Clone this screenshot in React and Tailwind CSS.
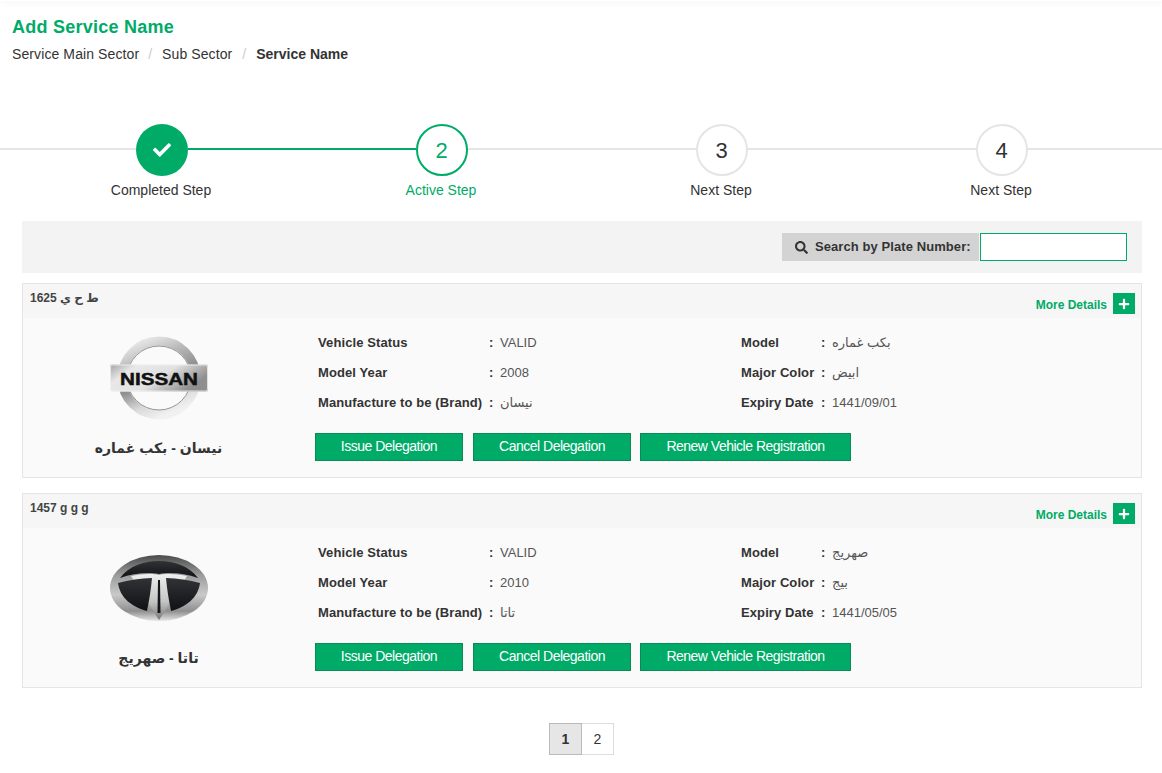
import { FaCheck, FaSearch, FaPlus } from 'react-icons/fa'

const FONT = { fontFamily: '"Liberation Sans", "DejaVu Sans", Arial, sans-serif' }

const STEPS = [
  { label: 'Completed Step', state: 'done' },
  { label: 'Active Step', state: 'active', n: 2 },
  { label: 'Next Step', state: 'next', n: 3 },
  { label: 'Next Step', state: 'next', n: 4 },
]

const VEHICLES = [
  {
    plate: 'ط ح ي 1625',
    logo: 'nissan',
    title: 'نيسان - بكب غماره',
    status: 'VALID', model: 'بكب غماره', year: '2008', color: 'ابيض', brand: 'نيسان', expiry: '1441/09/01',
  },
  {
    plate: '1457 g g g',
    logo: 'tata',
    title: 'تاتا - صهريج',
    status: 'VALID', model: 'صهريج', year: '2010', color: 'بيج', brand: 'تاتا', expiry: '1441/05/05',
  },
]

function NissanLogo() {
  return (
    <svg width="100" height="86" viewBox="0 0 100 86">
      <defs>
        <linearGradient id="nRing" x1="0.2" y1="0" x2="0.6" y2="1">
          <stop offset="0" stopColor="#e9e9e9" />
          <stop offset="0.3" stopColor="#b4b4b4" />
          <stop offset="0.55" stopColor="#8e8e8e" />
          <stop offset="0.8" stopColor="#d9d9d9" />
          <stop offset="1" stopColor="#f1f1f1" />
        </linearGradient>
        <linearGradient id="nBar" x1="0" y1="0" x2="1" y2="0.4">
          <stop offset="0" stopColor="#a4a4a4" />
          <stop offset="0.25" stopColor="#e8e8e8" />
          <stop offset="0.6" stopColor="#e2e2e2" />
          <stop offset="1" stopColor="#8f8f8f" />
        </linearGradient>
      </defs>
      <circle cx="50" cy="43" r="37" fill="none" stroke="url(#nRing)" strokeWidth="9" />
      <circle cx="50" cy="43" r="32" fill="none" stroke="#777777" strokeWidth="0.8" />
      <rect x="1" y="29.5" width="98" height="27" rx="2" fill="url(#nBar)" />
      <rect x="1.5" y="30" width="97" height="26" rx="2" fill="none" stroke="#f4f4f4" strokeWidth="0.8" />
      <text x="50" y="49.5" textAnchor="middle" fontFamily="Liberation Sans, Arial, sans-serif" fontWeight="700" fontSize="17" textLength="78" lengthAdjust="spacingAndGlyphs" fill="#111111" stroke="#111111" strokeWidth="0.5">NISSAN</text>
    </svg>
  )
}

function TataLogo() {
  return (
    <svg width="100" height="68" viewBox="0 0 100 68">
      <defs>
        <linearGradient id="tBody" x1="0" y1="0" x2="0" y2="1">
          <stop offset="0" stopColor="#4a4a4a" />
          <stop offset="0.3" stopColor="#9a9a9a" />
          <stop offset="0.6" stopColor="#c9c9c9" />
          <stop offset="0.85" stopColor="#8f8f8f" />
          <stop offset="1" stopColor="#e6e6e6" />
        </linearGradient>
        <linearGradient id="tDark" x1="0" y1="0" x2="0" y2="1">
          <stop offset="0" stopColor="#303236" />
          <stop offset="1" stopColor="#101115" />
        </linearGradient>
        <linearGradient id="tStem" x1="0" y1="0" x2="0" y2="1">
          <stop offset="0" stopColor="#f0f0f0" />
          <stop offset="0.6" stopColor="#c4c4c4" />
          <stop offset="1" stopColor="#777777" />
        </linearGradient>
      </defs>
      <ellipse cx="50" cy="34" rx="49" ry="33" fill="url(#tBody)" />
      <path d="M11 24 C20 12 35 7 50 7 C65 7 80 12 89 24 C76 19 60 18 50 20 C40 18 24 19 11 24 Z" fill="url(#tDark)" />
      <path d="M22 22 C30 20 44 19 50 21 C56 19 70 20 78 22 L50 66 Z" fill="url(#tStem)" />
      <path d="M9 29 C20 26 32 24.5 43 24 C42 36 40 47 38 57 C23 53 11 44 9 29 Z" fill="url(#tDark)" />
      <path d="M91 29 C80 26 68 24.5 57 24 C58 36 60 47 62 57 C77 53 89 44 91 29 Z" fill="url(#tDark)" />
      <path d="M49 26 H51 L51.5 59 H48.5 Z" fill="#15161a" />
    </svg>
  )
}

function Step({ step }) {
  if (step.state === 'done') {
    return (
      <div className="w-[52px] h-[52px] rounded-full bg-[#00ab67] flex items-center justify-center shrink-0 text-white">
        <FaCheck size={18} />
      </div>
    )
  }
  const cls = step.state === 'active'
    ? 'border-[#00ab67] text-[#00ab67]'
    : 'border-[#e5e5e5] text-[#333333]'
  return (
    <div className={`w-[52px] h-[52px] rounded-full border-2 bg-white flex items-center justify-center shrink-0 pr-[1px] text-[22px] ${cls}`}>
      {step.n}
    </div>
  )
}

function Stepper() {
  return (
    <div className="mt-[60px]">
      <div className="flex items-center">
        <div className="w-[136px] h-[2px] -translate-y-[1px] bg-[#e5e5e5]" />
        <Step step={STEPS[0]} />
        <div className="w-[228px] h-[2px] -translate-y-[1px] bg-[#00ab67]" />
        <Step step={STEPS[1]} />
        <div className="w-[228px] h-[2px] -translate-y-[1px] bg-[#e5e5e5]" />
        <Step step={STEPS[2]} />
        <div className="w-[228px] h-[2px] -translate-y-[1px] bg-[#e5e5e5]" />
        <Step step={STEPS[3]} />
        <div className="flex-1 h-[2px] -translate-y-[1px] bg-[#e5e5e5]" />
      </div>
      <div className="grid grid-cols-4 w-[1120px] ml-[21px] mt-[4px] text-[14px] leading-[20px] text-center">
        {STEPS.map((s, i) => (
          <div key={i} className={s.state === 'active' ? 'text-[#00ab67]' : 'text-[#333333]'}>{s.label}</div>
        ))}
      </div>
    </div>
  )
}

function Field({ label, value, labelW }) {
  return (
    <div className="flex items-center h-[30px] text-[13px]">
      <span className="font-bold text-[#333333] shrink-0 tracking-[0.1px]" style={{ width: labelW }}>{label}</span>
      <span className="font-bold text-[#333333] w-[11px] shrink-0">:</span>
      <span className="text-[#555555]">{value}</span>
    </div>
  )
}

function VehicleCard({ v }) {
  return (
    <div className="border border-[#e5e5e5] bg-[#fafafa] h-[195px]">
      <div className="h-[34px] bg-[#f6f6f6] flex justify-between pl-[7px] pr-[6px]">
        <div className="text-[12px] font-bold text-[#444444] mt-[6px] leading-[16px]">{v.plate}</div>
        <div className="flex items-start mt-[9px]">
          <span className="text-[12px] font-bold text-[#00ab67] mt-[4px] leading-[16px]">More Details</span>
          <span className="ml-[6px] w-[22px] h-[21px] bg-[#00ab67] flex items-center justify-center text-white">
            <FaPlus size={12} />
          </span>
        </div>
      </div>
      <div className="flex">
        <div className="w-[271px] shrink-0 flex flex-col items-center pt-[10px]">
          <div className="h-[100px] flex items-center justify-center w-full">
            {v.logo === 'nissan' ? <NissanLogo /> : <TataLogo />}
          </div>
          <div className="text-[14px] font-bold text-[#333333] mt-[8px] leading-[24px]">{v.title}</div>
        </div>
        <div className="flex-1 pt-[10px] pl-[24px]">
          <div className="flex">
            <div className="w-[423px] shrink-0">
              <Field label="Vehicle Status" value={v.status} labelW={171} />
              <Field label="Model Year" value={v.year} labelW={171} />
              <Field label="Manufacture to be (Brand)" value={v.brand} labelW={171} />
            </div>
            <div>
              <Field label="Model" value={v.model} labelW={80} />
              <Field label="Major Color" value={v.color} labelW={80} />
              <Field label="Expiry Date" value={v.expiry} labelW={80} />
            </div>
          </div>
          <div className="flex mt-[15px] -ml-[3px]">
            <button className="w-[148px] h-[28px] pb-[1px] bg-[#00ab67] border border-[#0b8a57] text-white text-[14px] tracking-[-0.5px]">Issue Delegation</button>
            <button className="w-[158px] h-[28px] pb-[1px] ml-[10px] bg-[#00ab67] border border-[#0b8a57] text-white text-[14px] tracking-[-0.5px]">Cancel Delegation</button>
            <button className="w-[211px] h-[28px] pb-[1px] ml-[9px] bg-[#00ab67] border border-[#0b8a57] text-white text-[14px] tracking-[-0.5px]">Renew Vehicle Registration</button>
          </div>
        </div>
      </div>
    </div>
  )
}

export default function App() {
  return (
    <div className="w-[1162px] h-[773px] overflow-hidden bg-white relative" style={FONT}>
      <div className="h-[1px] shadow-[0_0_6px_rgba(0,0,0,0.2)]" />
      <div className="pl-[12px] pt-[16px]">
        <h1 className="text-[18px] font-bold text-[#00ab67] leading-[20px] tracking-[0.25px]">Add Service Name</h1>
        <div className="flex text-[14px] leading-[20px] mt-[7px] text-[#333333]">
          <span className="tracking-[0.1px]">Service Main Sector</span>
          <span className="text-[#cccccc] ml-[9px] mr-[10px]">/</span>
          <span className="tracking-[0.1px]">Sub Sector</span>
          <span className="text-[#cccccc] ml-[10px] mr-[10px]">/</span>
          <span className="font-bold">Service Name</span>
        </div>
      </div>
      <Stepper />
      <div className="w-[1120px] ml-[22px] mt-[21px]">
        <div className="h-[52px] bg-[#f3f3f3] flex items-center justify-end pr-[15px]">
          <div className="h-[28px] w-[197px] bg-[#d3d3d3] flex items-center pl-[13px] text-[13px] font-bold text-[#333333] tracking-[0.08px] whitespace-nowrap">
            <FaSearch size={13} className="mr-[7px]" />
            Search by Plate Number:
          </div>
          <input className="w-[147px] h-[28px] ml-[1px] bg-white border border-[#00ab67] outline-none" />
        </div>
        <div className="mt-[10px] flex flex-col gap-[15px]">
          {VEHICLES.map(v => <VehicleCard key={v.plate} v={v} />)}
        </div>
        <div className="flex justify-center mt-[35px] pr-[1px]">
          <div className="w-[33px] h-[32px] bg-[#e6e6e6] border border-[#bbbbbb] flex items-center justify-center text-[14px] font-bold text-[#333333]">1</div>
          <div className="w-[32px] h-[32px] bg-white border border-[#dddddd] border-l-0 flex items-center justify-center text-[14px] text-[#333333]">2</div>
        </div>
      </div>
    </div>
  )
}
